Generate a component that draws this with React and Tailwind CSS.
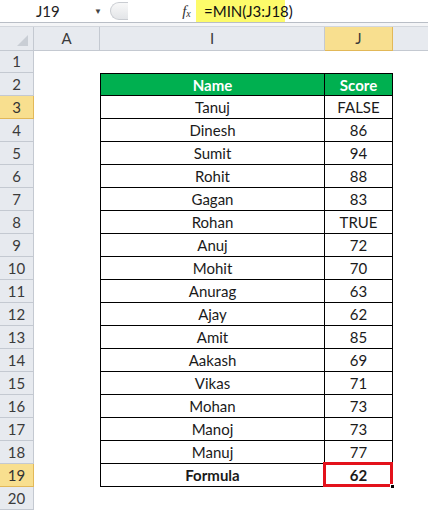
import React from 'react';

const rows = [
  ['Tanuj', 'FALSE'],
  ['Dinesh', '86'],
  ['Sumit', '94'],
  ['Rohit', '88'],
  ['Gagan', '83'],
  ['Rohan', 'TRUE'],
  ['Anuj', '72'],
  ['Mohit', '70'],
  ['Anurag', '63'],
  ['Ajay', '62'],
  ['Amit', '85'],
  ['Aakash', '69'],
  ['Vikas', '71'],
  ['Mohan', '73'],
  ['Manoj', '73'],
  ['Manuj', '77'],
];

const RowHead = ({ n, active }) => (
  <div
    className={`flex items-center justify-center border-b border-r text-[15px] ${
      active
        ? 'bg-[#f8df8f] border-[#e2b858] text-[#333]'
        : 'bg-[#e7eaef] border-[#c4c9d1] text-[#3b3b3b]'
    }`}
  >
    {n}
  </div>
);

const Row = ({ n, active, children }) => (
  <div className="grid grid-cols-[34px_66px_225px_68px_1fr] h-[23px] leading-[20px]">
    <RowHead n={n} active={active} />
    <div />
    {children || (
      <>
        <div />
        <div />
      </>
    )}
    <div />
  </div>
);

const App = () => {
  return (
    <div className="w-[428px] h-[511px] overflow-hidden bg-white" style={{ fontFamily: 'Lato, "Open Sans", sans-serif' }}>
      {/* formula bar */}
      <div className="h-[23px] flex items-stretch border-b border-[#b9bec6] bg-white">
        <div className="w-[110px] flex items-center pl-[36px] pr-2 text-[15px] text-[#222]">
          <span className="flex-1">J19</span>
          <span className="text-[8px] text-[#444]">▼</span>
        </div>
        <div className="w-[18px] my-[2px] rounded-l-full border border-r-0 border-[#c9ccd1] bg-gradient-to-b from-[#f8f8f8] to-[#e3e5e8]" />
        <div className="w-[50px]" />
        <div className="w-[17px] flex items-center justify-center italic text-[15px] text-[#333]" style={{ fontFamily: '"Liberation Serif", serif' }}>
          f<span className="text-[10px] mt-[4px]">x</span>
        </div>
        <div className="w-[89px] ml-[1px] bg-[#fdfb6a] flex items-center pl-[8px] text-[15px] text-[#111]">
          =MIN(J3:J18)
        </div>
        <div className="flex-1" />
      </div>
      <div className="h-[4px] bg-[#f4f5f7] border-b border-[#d3d7dd]" />

      {/* column headers */}
      <div className="grid grid-cols-[34px_66px_225px_68px_1fr] h-[23px] text-[15px] text-[#3b3b3b]">
        <div className="relative bg-[#e7eaef] border-r border-b border-[#c4c9d1]">
          <div className="absolute right-[5px] bottom-[4px] w-0 h-0 border-l-[11px] border-l-transparent border-b-[11px] border-b-[#c9ced5]" />
        </div>
        <div className="bg-[#e7eaef] border-r border-b border-[#c4c9d1] flex items-center justify-center">A</div>
        <div className="bg-[#e7eaef] border-r border-b border-[#c4c9d1] flex items-center justify-center">I</div>
        <div className="bg-[#f8df8f] border-r border-b border-[#e2b858] flex items-center justify-center">J</div>
        <div className="bg-[#e7eaef] border-b border-[#c4c9d1]" />
      </div>

      {/* sheet */}
      <div className="text-[15px] text-[#1a1a1a]">
        <Row n={1} />
        <Row n={2}>
          <div className="bg-[#00b050] border border-black text-white font-bold flex items-center justify-center">Name</div>
          <div className="bg-[#00b050] border-t border-r border-b border-black text-white font-bold flex items-center justify-center">Score</div>
        </Row>
        {rows.map(([name, score], i) => (
          <Row key={name} n={i + 3} active={i === 0}>
            <div className="border-l border-r border-b border-black flex items-center justify-center">{name}</div>
            <div className="border-r border-b border-black flex items-center justify-center">{score}</div>
          </Row>
        ))}
        <Row n={19} active>
          <div className="border-l border-r border-b border-black flex items-center justify-center font-bold">Formula</div>
          <div className="relative border-r border-b border-black flex items-center justify-center font-bold">
            62
            <div className="absolute -left-[2px] -top-[2px] -right-[1px] -bottom-[1px] border-[3px] border-[#e3111b]" />
            <div className="absolute -right-[3px] -bottom-[3px] w-[5px] h-[5px] bg-black border border-white" />
          </div>
        </Row>
        <Row n={20} />
      </div>
    </div>
  );
};

export default App;
